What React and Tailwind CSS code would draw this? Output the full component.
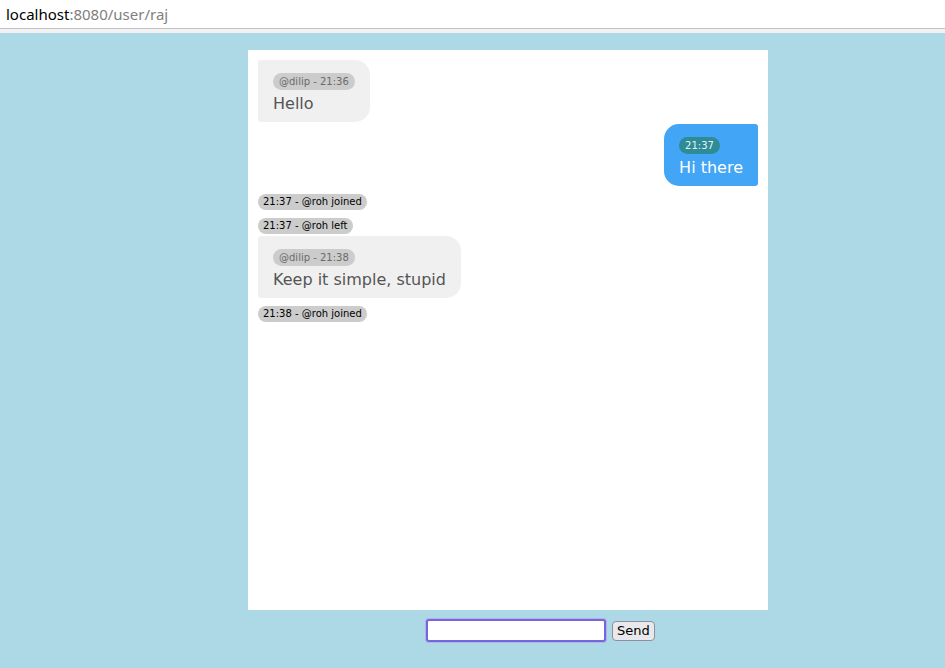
import React from 'react';

const dejavu = { fontFamily: '"DejaVu Sans", sans-serif' };

// --- Mensajes de ejemplo ---
const MESSAGES = [
  { type: 'msg', from: 'dilip', time: '21:36', text: 'Hello', mine: false, gap: 'mt-0' },
  { type: 'msg', from: 'raj', time: '21:37', text: 'Hi there', mine: true, gap: 'mt-[2px]' },
  { type: 'sys', text: '21:37 - @roh joined', gap: 'mt-2' },
  { type: 'sys', text: '21:37 - @roh left', gap: 'mt-2' },
  { type: 'msg', from: 'dilip', time: '21:38', text: 'Keep it simple, stupid', mine: false, gap: 'mt-[2px]' },
  { type: 'sys', text: '21:38 - @roh joined', gap: 'mt-2' },
];

const Bubble = ({ m }) => {
  if (m.mine) {
    return (
      <div className={`${m.gap} self-end bg-[#42a5f5] rounded-l-[15px] rounded-r-[3px] px-[15px] pt-[13px] pb-[8px]`}>
        <div className="w-fit bg-[#2e8c96] text-[#e6f2f6] text-[10px] leading-[17px] px-[6px] rounded-full">{m.time}</div>
        <div className="text-white text-[16px] leading-[20px] mt-[4px]">{m.text}</div>
      </div>
    );
  }
  return (
    <div className={`${m.gap} self-start bg-[#f0f0f0] rounded-r-[15px] rounded-l-[3px] px-[15px] pt-[13px] pb-[8px]`}>
      <div className="w-fit bg-[#cccccc] text-[#6a6a6a] text-[10px] leading-[17px] px-[6px] rounded-full">@{m.from} - {m.time}</div>
      <div className="text-[#555555] text-[16px] leading-[20px] mt-[4px]">{m.text}</div>
    </div>
  );
};

const SystemLine = ({ m }) => (
  <div className={`${m.gap} self-start bg-[#cccccc] text-black text-[10px] leading-[16px] px-[5px] rounded-full`}>{m.text}</div>
);

export default function App() {
  return (
    <div className="min-h-[668px] bg-[#add8e6]" style={dejavu}>
      {/* barra de direcciones */}
      <div className="h-[28px] bg-white flex items-center pl-[6px] text-[15px]" style={{ fontFamily: '"Noto Sans", sans-serif' }}>
        <span className="text-black">localhost</span>
        <span className="text-[#808080]">:8080/user/raj</span>
      </div>
      <div className="h-[1px] bg-[#c4c4c4]" />
      <div className="h-[4px] bg-[#f2f2f4]" />

      <div className="ml-[248px] w-[520px] pt-[17px]">
        <div className="h-[560px] bg-white p-[10px] flex flex-col">
          {MESSAGES.map((m, i) =>
            m.type === 'sys' ? <SystemLine key={i} m={m} /> : <Bubble key={i} m={m} />
          )}
        </div>

        <div className="flex items-center pl-[177px] pt-[8px]">
          <div className="rounded-[4px] p-[1px] bg-[#b3b0ea]">
            <input className="block w-[180px] h-[23px] border-2 border-[#7367dc] rounded-[3px] bg-white outline-none" />
          </div>
          <button className="ml-[5px] h-[20px] px-[4px] text-[13px] leading-none text-black bg-[#e9e9ed] border border-[#8f8f9d] rounded-[4px]">Send</button>
        </div>
      </div>
    </div>
  );
}
